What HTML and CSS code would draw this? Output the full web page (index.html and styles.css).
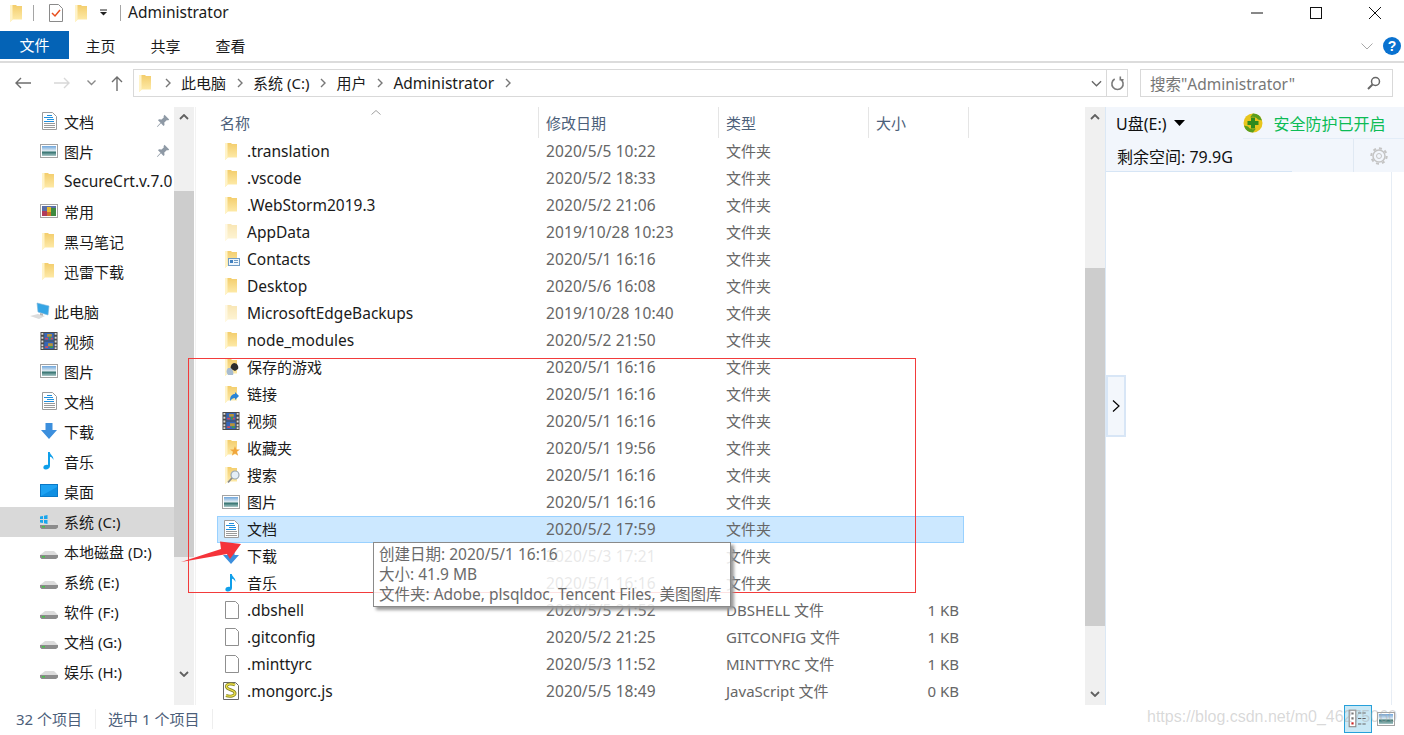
FILE: index.html
```html
<!DOCTYPE html>
<html lang="zh">
<head>
<meta charset="utf-8">
<title>Administrator</title>
<link rel="stylesheet" href="styles.css">
</head>
<body>
<svg class="defs" width="0" height="0" aria-hidden="true">
  <defs>
    <linearGradient id="fg" x1="0" y1="0" x2="0" y2="1"><stop offset="0" stop-color="#f3cd6c"/><stop offset="1" stop-color="#ffeeb0"/></linearGradient>
    <linearGradient id="sky" x1="0" y1="0" x2="0" y2="1"><stop offset="0" stop-color="#6fa6dc"/><stop offset=".5" stop-color="#e4eef2"/><stop offset=".6" stop-color="#2f6f6c"/><stop offset="1" stop-color="#a9c8c8"/></linearGradient>
    <symbol id="i-folder" viewBox="0 0 18 18">
      <path d="M3 1h6l1 1h5v13.500H6L3 18z" fill="url(#fg)"/>
      <path d="M3 1h2.500v14.500L3 18z" fill="#fff3c8"/>
    </symbol>
    <symbol id="i-doc" viewBox="0 0 18 18">
      <path d="M2.500.5h10l4 4v13h-14z" fill="#fff" stroke="#9b9b9b"/>
      <path d="M7 3.500h5M4 5.500h9M7 7.500h7M4 9.500h10" stroke="#1e90e0" fill="none"/>
      <path d="M4 11.500h11M4 13.500h11M4 15.500h11" stroke="#9a9a9a" fill="none"/>
    </symbol>
    <symbol id="i-pic" viewBox="0 0 18 18">
      <rect x=".5" y="2.500" width="17" height="13" fill="#fff" stroke="#a3a3a3"/>
      <rect x="2" y="4" width="14" height="10" fill="url(#sky)"/>
    </symbol>
    <symbol id="i-video" viewBox="0 0 18 19">
      <rect x="0" y="0" width="18" height="19" fill="#4a4a4a"/>
      <path d="M1 1h2v2H1zM1 5h2v2H1zM1 9h2v2H1zM1 13h2v2H1zM1 16h2v2H1zM15 1h2v2h-2zM15 5h2v2h-2zM15 9h2v2h-2zM15 13h2v2h-2zM15 16h2v2h-2z" fill="#ddd"/>
      <rect x="4" y="1" width="10" height="8" fill="#3566b8"/>
      <rect x="4" y="10" width="10" height="8" fill="#3566b8"/>
      <path d="M7 2h5v3H7zM8 12h5v3H8z" fill="#b9923a"/>
      <path d="M5 6h3v2H5zM10 6h3v2h-3zM5 15h3v2H5z" fill="#d24a5a"/>
      <path d="M9 5h2v3H9zM10 15h3v2h-3z" fill="#3c9a4a"/>
    </symbol>
    <symbol id="i-mix" viewBox="0 0 18 18">
      <rect x=".5" y="2.500" width="17" height="13" fill="#fff" stroke="#a3a3a3"/>
      <rect x="2" y="4" width="14" height="10" fill="#5a6fa8"/>
      <path d="M2 9h5v5H2z" fill="#b13b5a"/>
      <path d="M7 5h4v5H7z" fill="#e8b92f"/>
      <path d="M11 6h5v8h-5z" fill="#3f8a3f"/>
      <path d="M7 10h4v4H7z" fill="#d0702a"/>
    </symbol>
    <symbol id="i-down" viewBox="0 0 18 18">
      <path d="M5.500 1h7v7H17l-8 9-8-9h4.500z" fill="#3c8fdd"/>
    </symbol>
    <symbol id="i-music" viewBox="0 0 18 18">
      <path d="M8 0h1.800c.3 3 4.200 4 3.600 8-.6-2-2-3-3.400-3.200V14c0 2.200-2.200 3.500-4.200 3.500S3 16.200 3.500 14.700C4 13.200 6.300 12.400 8 13z" fill="#0f9fea"/>
    </symbol>
    <symbol id="i-desk" viewBox="0 0 18 18">
      <rect x=".5" y="2.500" width="17" height="12" fill="#1ea2f2" stroke="#0b78c6"/>
      <path d="M1 14l16-9v9z" fill="#0f8fe2"/>
    </symbol>
    <symbol id="i-drive" viewBox="0 0 18 18">
      <path d="M0 13l5-4h9l4 4z" fill="#dcdcdc"/>
      <path d="M0 13h18v2.500L16 17H1.500L0 15.500z" fill="#8c8c8c"/>
      <path d="M2 14h3v1.500H2z" fill="#48c048"/>
    </symbol>
    <symbol id="i-cdrive" viewBox="0 0 18 18">
      <path d="M0 13l5-4h9l4 4z" fill="#dcdcdc"/>
      <path d="M0 13h18v2.500L16 17H1.500L0 15.500z" fill="#8c8c8c"/>
      <path d="M2 14h3v1.500H2z" fill="#48c048"/>
      <path d="M0 4.500l3-.5v3H0zM4 3.800L7.500 3v4H4zM0 8h3v3l-3-.5zM4 8h3.500v4L4 11.300z" fill="#19a5ec"/>
    </symbol>
    <symbol id="i-pc" viewBox="0 0 20 18">
      <path d="M7 1l12 3-1 9-10-3z" fill="#35a5e5" stroke="#7db6d8" stroke-width=".6"/>
      <path d="M0 14l8-2 7 2-6 3z" fill="#dcdcdc"/>
      <path d="M10 11l3 .8v2L10 13z" fill="#b5b5b5"/>
    </symbol>
    <symbol id="i-pin" viewBox="0 0 14 14">
      <path d="M8.500.800l4.700 4.700-1.200 1-1-.4L8.300 8.400 8.500 11 7.500 12 5 9.300 1.500 13 1 12.500 4.500 8.800 2 6.300l1-1 2.600.3 2.300-2.300-.4-1z" fill="#8e99a5"/>
    </symbol>
    <symbol id="i-file" viewBox="0 0 18 18">
      <path d="M3.500.5h10l3 3v14h-13z" fill="#fff" stroke="#8f8f8f"/>
    </symbol>
    <symbol id="i-script" viewBox="0 0 18 18">
      <path d="M1.500.5h12l3 3v14h-15z" fill="#fff" stroke="#666"/>
      <path d="M13 3c-4-2-9-1-8.500 2 .5 3 8 2.500 8.500 6 .3 3-5 4-9 2.500" fill="none" stroke="#8a8a2a" stroke-width="3"/>
      <path d="M13 3c-4-2-9-1-8.500 2 .5 3 8 2.500 8.500 6 .3 3-5 4-9 2.500" fill="none" stroke="#f1e24a" stroke-width="1.200"/>
    </symbol>
    <symbol id="i-contacts" viewBox="0 0 18 18">
      <use href="#i-folder"/>
      <rect x="6.500" y="8.500" width="11" height="7" fill="#eef5fb" stroke="#6f9bc4"/>
      <path d="M8 10h3v3H8z" fill="#3f7fbf"/><path d="M12 10.500h4M12 12.500h4" stroke="#6f9bc4"/>
    </symbol>
    <symbol id="i-games" viewBox="0 0 18 18">
      <use href="#i-folder"/>
      <path d="M12 5c-3 1-4 4-3 6l4 2 3-2c1-3-1-6-4-6z" fill="#2b2b2b"/>
      <path d="M6 10c-2 2-2 5 0 7h5c1-2 0-5-2-7z" fill="#a7bbd0"/>
    </symbol>
    <symbol id="i-link" viewBox="0 0 18 18">
      <use href="#i-folder"/>
      <path d="M8 16c0-5 2-7 5-7V7l4 4-4 4v-2c-2 0-3.500 1-5 3z" fill="#2a84d6"/>
    </symbol>
    <symbol id="i-fav" viewBox="0 0 18 18">
      <use href="#i-folder"/>
      <path d="M13 7l1.300 3.500H18l-3 2.300 1.200 4L13 14.500 9.800 16.800l1.200-4-3-2.300h3.700z" fill="#f0a63c"/>
    </symbol>
    <symbol id="i-search" viewBox="0 0 18 18">
      <use href="#i-folder"/>
      <circle cx="13" cy="9" r="4" fill="#e4eef7" stroke="#9aa7b0" stroke-width="1.200"/>
      <path d="M10 12l-4 4.500" stroke="#8a8a8a" stroke-width="1.800"/>
    </symbol>
  </defs>
</svg>

<div class="window">
  <header class="titlebar">
    <svg class="ico18 tb-folder"><use href="#i-folder"/></svg>
    <span class="tb-sep"></span>
    <svg class="tb-check" viewBox="0 0 14 18"><path d="M.5.5h9l4 4v13H.5z" fill="#fff" stroke="#8a8a8a"/><path d="M3 9l3 3 5-6" fill="none" stroke="#e8501f" stroke-width="1.500"/></svg>
    <svg class="ico18 tb-folder2"><use href="#i-folder"/></svg>
    <svg class="tb-drop" viewBox="0 0 8 7"><path d="M0 1h7" stroke="#222"/><path d="M0 3h7L3.500 6.500z" fill="#222"/></svg>
    <span class="tb-sep tb-sep2"></span>
    <span class="tb-title lat">Administrator</span>
    <div class="win-btns">
      <svg viewBox="0 0 12 12"><path d="M0 6h12" stroke="#111"/></svg>
      <svg viewBox="0 0 12 12"><rect x=".5" y=".5" width="11" height="11" fill="none" stroke="#111"/></svg>
      <svg viewBox="0 0 12 12"><path d="M0 0l12 12M12 0L0 12" stroke="#111"/></svg>
    </div>
  </header>

  <nav class="ribbon">
    <span class="tab tab-file">文件</span>
    <span class="tab">主页</span>
    <span class="tab">共享</span>
    <span class="tab">查看</span>
    <svg class="rb-chev" viewBox="0 0 12 7"><path d="M.5.500L6 6l5.500-5.500" fill="none" stroke="#a8a8a8"/></svg>
    <svg class="rb-help" viewBox="0 0 18 18"><circle cx="9" cy="9" r="9" fill="#0a72d0"/><text x="9" y="14" text-anchor="middle" class="help-q">?</text></svg>
  </nav>

  <div class="addrrow">
    <svg class="ar-btn ar-back" viewBox="0 0 16 12"><path d="M16 6H1M6 1L1 6l5 5" fill="none" stroke="#6d6d6d" stroke-width="1.400"/></svg>
    <svg class="ar-btn ar-fwd" viewBox="0 0 16 12"><path d="M0 6h15M10 1l5 5-5 5" fill="none" stroke="#d8d8d8" stroke-width="1.400"/></svg>
    <svg class="ar-btn ar-dn" viewBox="0 0 9 6"><path d="M.5.500L4.500 4.500 8.500.500" fill="none" stroke="#8a8a8a" stroke-width="1.400"/></svg>
    <svg class="ar-btn ar-up" viewBox="0 0 12 15"><path d="M6 15V1M1 6l5-5 5 5" fill="none" stroke="#6d6d6d" stroke-width="1.400"/></svg>
    <div class="addrbox">
      <svg class="ico18 ab-folder"><use href="#i-folder"/></svg>
      <svg class="crumb-sep" viewBox="0 0 10 10"><path d="M3 1l4 4-4 4" fill="none" stroke="#777" stroke-width="1.400"/></svg><span class="crumb">此电脑</span>
      <svg class="crumb-sep" viewBox="0 0 10 10"><path d="M3 1l4 4-4 4" fill="none" stroke="#777" stroke-width="1.400"/></svg><span class="crumb">系统 (C:)</span>
      <svg class="crumb-sep" viewBox="0 0 10 10"><path d="M3 1l4 4-4 4" fill="none" stroke="#777" stroke-width="1.400"/></svg><span class="crumb">用户</span>
      <svg class="crumb-sep" viewBox="0 0 10 10"><path d="M3 1l4 4-4 4" fill="none" stroke="#777" stroke-width="1.400"/></svg><span class="crumb lat">Administrator</span>
      <svg class="crumb-sep" viewBox="0 0 10 10"><path d="M3 1l4 4-4 4" fill="none" stroke="#777" stroke-width="1.400"/></svg>
      <svg class="ab-chev" viewBox="0 0 12 7"><path d="M1 1l5 5 5-5" fill="none" stroke="#666" stroke-width="1.400"/></svg>
      <span class="ab-refresh"><svg viewBox="0 0 16 16"><path d="M11 3.200A6 6 0 1 1 5 3.200M11 .5v3.500h3.500" fill="none" stroke="#7a7a7a" stroke-width="1.700"/></svg></span>
    </div>
    <div class="searchbox">
      <span class="sb-text lat">搜索"Administrator"</span>
      <svg viewBox="0 0 14 14"><circle cx="8.500" cy="5.500" r="4" fill="none" stroke="#666" stroke-width="1.500"/><path d="M5.500 8.500L1 13" stroke="#666" stroke-width="2"/></svg>
    </div>
  </div>

  <main class="content">
    <aside class="nav">
      <div class="nav-row"><svg class="ico18"><use href="#i-doc"/></svg><span class="nav-label">文档</span><svg class="pin"><use href="#i-pin"/></svg></div>
      <div class="nav-row"><svg class="ico18"><use href="#i-pic"/></svg><span class="nav-label">图片</span><svg class="pin"><use href="#i-pin"/></svg></div>
      <div class="nav-row"><svg class="ico18 nudge"><use href="#i-folder"/></svg><span class="nav-label lat">SecureCrt.v.7.0</span></div>
      <div class="nav-row"><svg class="ico18"><use href="#i-mix"/></svg><span class="nav-label">常用</span></div>
      <div class="nav-row"><svg class="ico18 nudge"><use href="#i-folder"/></svg><span class="nav-label">黑马笔记</span></div>
      <div class="nav-row"><svg class="ico18 nudge"><use href="#i-folder"/></svg><span class="nav-label">迅雷下载</span></div>
      <div class="nav-row nav-pc"><svg class="ico-pc"><use href="#i-pc"/></svg><span class="nav-label">此电脑</span></div>
      <div class="nav-row"><svg class="ico18"><use href="#i-video"/></svg><span class="nav-label">视频</span></div>
      <div class="nav-row"><svg class="ico18"><use href="#i-pic"/></svg><span class="nav-label">图片</span></div>
      <div class="nav-row"><svg class="ico18"><use href="#i-doc"/></svg><span class="nav-label">文档</span></div>
      <div class="nav-row"><svg class="ico18"><use href="#i-down"/></svg><span class="nav-label">下载</span></div>
      <div class="nav-row"><svg class="ico18"><use href="#i-music"/></svg><span class="nav-label">音乐</span></div>
      <div class="nav-row"><svg class="ico18"><use href="#i-desk"/></svg><span class="nav-label">桌面</span></div>
      <div class="nav-row is-current"><svg class="ico18"><use href="#i-cdrive"/></svg><span class="nav-label">系统 (C:)</span></div>
      <div class="nav-row"><svg class="ico18"><use href="#i-drive"/></svg><span class="nav-label">本地磁盘 (D:)</span></div>
      <div class="nav-row"><svg class="ico18"><use href="#i-drive"/></svg><span class="nav-label">系统 (E:)</span></div>
      <div class="nav-row"><svg class="ico18"><use href="#i-drive"/></svg><span class="nav-label">软件 (F:)</span></div>
      <div class="nav-row"><svg class="ico18"><use href="#i-drive"/></svg><span class="nav-label">文档 (G:)</span></div>
      <div class="nav-row"><svg class="ico18"><use href="#i-drive"/></svg><span class="nav-label">娱乐 (H:)</span></div>
    </aside>
    <div class="scrollbar sb-nav">
      <svg class="sb-arrow" viewBox="0 0 10 6"><path d="M1 5l4-4 4 4" fill="none" stroke="#606060" stroke-width="1.800"/></svg>
      <div class="sb-thumb"></div>
      <svg class="sb-arrow" viewBox="0 0 10 6"><path d="M1 1l4 4 4-4" fill="none" stroke="#606060" stroke-width="1.800"/></svg>
    </div>

    <section class="files">
      <svg class="sort-caret" viewBox="0 0 10 5"><path d="M.5 4.500L5 .5l4.500 4" fill="none" stroke="#a0a0a0"/></svg>
      <div class="col-head">
        <span class="col">名称</span><span class="col col-p">修改日期</span><span class="col col-p">类型</span><span class="col col-p">大小</span>
      </div>
      <div class="row"><span class="name"><svg class="ico18"><use href="#i-folder"/></svg><span class="lat">.translation</span></span><span class="date">2020/5/5 10:22</span><span>文件夹</span><span class="size"></span></div>
      <div class="row"><span class="name"><svg class="ico18"><use href="#i-folder"/></svg><span class="lat">.vscode</span></span><span class="date">2020/5/2 18:33</span><span>文件夹</span><span class="size"></span></div>
      <div class="row"><span class="name"><svg class="ico18"><use href="#i-folder"/></svg><span class="lat">.WebStorm2019.3</span></span><span class="date">2020/5/2 21:06</span><span>文件夹</span><span class="size"></span></div>
      <div class="row"><span class="name"><svg class="ico18 faded"><use href="#i-folder"/></svg><span class="lat">AppData</span></span><span class="date">2019/10/28 10:23</span><span>文件夹</span><span class="size"></span></div>
      <div class="row"><span class="name"><svg class="ico18"><use href="#i-contacts"/></svg><span class="lat">Contacts</span></span><span class="date">2020/5/1 16:16</span><span>文件夹</span><span class="size"></span></div>
      <div class="row"><span class="name"><svg class="ico18"><use href="#i-folder"/></svg><span class="lat">Desktop</span></span><span class="date">2020/5/6 16:08</span><span>文件夹</span><span class="size"></span></div>
      <div class="row"><span class="name"><svg class="ico18 faded"><use href="#i-folder"/></svg><span class="lat">MicrosoftEdgeBackups</span></span><span class="date">2019/10/28 10:40</span><span>文件夹</span><span class="size"></span></div>
      <div class="row"><span class="name"><svg class="ico18"><use href="#i-folder"/></svg><span class="lat">node_modules</span></span><span class="date">2020/5/2 21:50</span><span>文件夹</span><span class="size"></span></div>
      <div class="row"><span class="name"><svg class="ico18"><use href="#i-games"/></svg>保存的游戏</span><span class="date">2020/5/1 16:16</span><span>文件夹</span><span class="size"></span></div>
      <div class="row"><span class="name"><svg class="ico18"><use href="#i-link"/></svg>链接</span><span class="date">2020/5/1 16:16</span><span>文件夹</span><span class="size"></span></div>
      <div class="row"><span class="name"><svg class="ico18"><use href="#i-video"/></svg>视频</span><span class="date">2020/5/1 16:16</span><span>文件夹</span><span class="size"></span></div>
      <div class="row"><span class="name"><svg class="ico18"><use href="#i-fav"/></svg>收藏夹</span><span class="date">2020/5/1 19:56</span><span>文件夹</span><span class="size"></span></div>
      <div class="row"><span class="name"><svg class="ico18"><use href="#i-search"/></svg>搜索</span><span class="date">2020/5/1 16:16</span><span>文件夹</span><span class="size"></span></div>
      <div class="row"><span class="name"><svg class="ico18"><use href="#i-pic"/></svg>图片</span><span class="date">2020/5/1 16:16</span><span>文件夹</span><span class="size"></span></div>
      <div class="row is-selected"><span class="name"><svg class="ico18"><use href="#i-doc"/></svg>文档</span><span class="date">2020/5/2 17:59</span><span>文件夹</span><span class="size"></span></div>
      <div class="row"><span class="name"><svg class="ico18"><use href="#i-down"/></svg>下载</span><span class="date">2020/5/3 17:21</span><span>文件夹</span><span class="size"></span></div>
      <div class="row"><span class="name"><svg class="ico18"><use href="#i-music"/></svg>音乐</span><span class="date">2020/5/1 16:16</span><span>文件夹</span><span class="size"></span></div>
      <div class="row"><span class="name"><svg class="ico18"><use href="#i-file"/></svg><span class="lat">.dbshell</span></span><span class="date">2020/5/5 21:52</span><span>DBSHELL 文件</span><span class="size">1 KB</span></div>
      <div class="row"><span class="name"><svg class="ico18"><use href="#i-file"/></svg><span class="lat">.gitconfig</span></span><span class="date">2020/5/2 21:25</span><span>GITCONFIG 文件</span><span class="size">1 KB</span></div>
      <div class="row"><span class="name"><svg class="ico18"><use href="#i-file"/></svg><span class="lat">.minttyrc</span></span><span class="date">2020/5/3 11:52</span><span>MINTTYRC 文件</span><span class="size">1 KB</span></div>
      <div class="row"><span class="name"><svg class="ico18"><use href="#i-script"/></svg><span class="lat">.mongorc.js</span></span><span class="date">2020/5/5 18:49</span><span>JavaScript 文件</span><span class="size">0 KB</span></div>
    </section>

    <div class="scrollbar sb-files">
      <svg class="sb-arrow" viewBox="0 0 10 6"><path d="M1 5l4-4 4 4" fill="none" stroke="#606060" stroke-width="1.800"/></svg>
      <div class="sb-thumb"></div>
      <svg class="sb-arrow" viewBox="0 0 10 6"><path d="M1 1l4 4 4-4" fill="none" stroke="#606060" stroke-width="1.800"/></svg>
    </div>

    <aside class="panel">
      <div class="panel-top">
        <span class="drive-name">U盘(E:)</span>
        <svg class="drive-tri" viewBox="0 0 11 6"><path d="M0 0h11L5.500 6z" fill="#000"/></svg>
        <svg class="shield" viewBox="0 0 20 20"><circle cx="10" cy="10" r="9.500" fill="#e8c51c"/><path d="M10 .5a9.500 9.500 0 0 1 9 7l-4-1a6 6 0 0 0-8-2zM10 19.500a9.500 9.500 0 0 1-9-7l4 1a6 6 0 0 0 8 2z" fill="#5a9e1e"/><path d="M8 4.500h4V8h3.500v4H12v3.500H8V12H4.500V8H8z" fill="#2f8a1e"/></svg>
        <span class="safe-text">安全防护已开启</span>
      </div>
      <div class="panel-info">
        <span class="free">剩余空间: 79.9G</span>
        <span class="gear-cell"><svg viewBox="0 0 18 18"><circle cx="9" cy="9" r="6" fill="none" stroke="#c4c4c4" stroke-width="1.500"/><circle cx="9" cy="9" r="7.700" fill="none" stroke="#c4c4c4" stroke-width="2" stroke-dasharray="3 3"/><circle cx="9" cy="9" r="2.500" fill="none" stroke="#c4c4c4"/></svg></span>
      </div>
      <div class="panel-body"></div>
      <div class="panel-handle"><svg viewBox="0 0 8 12"><path d="M1 .5L7 6l-6 5.500" fill="none" stroke="#000" stroke-width="1.200"/></svg></div>
    </aside>
  </main>

  <footer class="status">
    <span class="st-item">32 个项目</span>
    <span class="st-item">选中 1 个项目</span>
    <div class="views">
      <span class="view view-on"><svg viewBox="0 0 20 18"><rect x="2" y="1" width="6" height="15" fill="#fff" stroke="#888"/><path d="M4 3h2v2H4zM4 7.500h2v2H4z" fill="#777"/><path d="M4 12h2v2H4z" fill="#c22"/><path d="M10 3.500h8M10 8.500h8M10 13.500h8" stroke="#666" stroke-dasharray="3 1"/></svg></span>
      <svg class="view-big"><use href="#i-pic"/></svg>
    </div>
  </footer>

  <div class="watermark">https://blog.csdn.net/m0_46275060</div>
  <div class="red-box"></div>
  <div class="tooltip">
    <div>创建日期: 2020/5/1 16:16</div>
    <div>大小: 41.9 MB</div>
    <div>文件夹: Adobe, plsqldoc, Tencent Files, 美图图库</div>
  </div>
  <svg class="red-arrow" viewBox="0 0 62 24"><path d="M0 22L40 9 39 1.500 60 4 49 19 46 14z" fill="#f5333a"/></svg>
</div>
</body>
</html>
```

FILE: styles.css
```css
* { box-sizing: border-box; }
html, body { margin: 0; padding: 0; background: #fff; }
body {
  font-family: "Noto Sans", "Noto Sans CJK SC", sans-serif;
  font-size: 15px;
  color: #1a1a1a;
  overflow: hidden;
}
.defs { position: absolute; }
svg { display: block; flex: none; }
.window { position: relative; width: 1404px; height: 735px; overflow: hidden; display: flex; flex-direction: column; }
.ico18 { width: 18px; height: 18px; }
.lat { font-size: 15.5px; }

/* Title bar */
.titlebar { height: 31px; display: flex; align-items: center; padding: 0 0 6px 7px; }
.tb-sep { width: 1px; height: 16px; background: #a5a5a5; margin-left: 8px; }
.tb-check { width: 14px; height: 18px; margin-left: 15px; }
.tb-folder2 { margin-left: 9px; }
.tb-drop { width: 8px; height: 7px; margin-left: 10px; }
.tb-sep2 { margin-left: 12px; }
.tb-title { margin-left: 7px; line-height: 20px; margin-bottom: 2px; }
.win-btns { margin-left: auto; display: flex; gap: 47px; padding-right: 23px; }
.win-btns svg { width: 12px; height: 12px; }

/* Ribbon */
.ribbon { height: 32px; display: flex; align-items: flex-start; border-bottom: 2px solid #dcdcdc; }
.tab { height: 28px; width: 65px; line-height: 31px; text-align: center; }
.tab-file { width: 69px; line-height: 29px; background: #0463b6; color: #fff; margin-right: -1px; }
.rb-chev { width: 12px; height: 7px; margin: 12px 0 0 auto; }
.rb-help { width: 18px; height: 18px; margin: 6px 3px 0 10px; }
.help-q { font: bold 14px "Liberation Sans", sans-serif; fill: #fff; }

/* Address row */
.addrrow { height: 44px; display: flex; align-items: center; padding-bottom: 4px; }
.ar-btn { height: auto; }
.ar-back { width: 16px; margin-left: 15px; }
.ar-fwd { width: 16px; margin-left: 23px; }
.ar-dn { width: 9px; margin-left: 17px; }
.ar-up { width: 12px; margin-left: 15px; }
.addrbox { width: 995px; height: 28px; margin-left: 10px; border: 1px solid #d9d9d9; display: flex; align-items: center; padding-left: 2px; }
.crumb-sep { width: 10px; height: 10px; margin-left: 9px; }
.crumb { margin-left: 8px; line-height: 24px; color: #1a1a1a; }
.ab-chev { width: 11px; height: 7px; margin-left: auto; }
.ab-refresh { width: 21px; height: 26px; margin-left: 4px; border-left: 1px solid #d9d9d9; display: flex; align-items: center; justify-content: center; }
.ab-refresh svg { width: 15px; height: 15px; }
.searchbox { width: 253px; height: 28px; margin-left: 12px; border: 1px solid #d9d9d9; display: flex; align-items: center; justify-content: space-between; padding: 0 11px 0 9px; color: #777; }
.searchbox svg { width: 14px; height: 14px; }

/* Main */
.content { height: 598px; display: flex; }
.nav { width: 174px; flex: none; }
.nav-row { height: 30px; display: flex; align-items: center; padding: 0 0 2px 40px; gap: 6px; white-space: nowrap; overflow: hidden; }
.nudge { margin-left: -1px; margin-right: 1px; }
.nav-pc { margin-top: 10px; padding-left: 30px; gap: 4px; }
.ico-pc { width: 20px; height: 18px; }
.is-current { background: #d9d9d9; }
.pin { width: 14px; height: 14px; margin-left: auto; margin-right: 4px; }

.scrollbar { width: 20px; flex: none; background: #f0f0f0; display: flex; flex-direction: column; align-items: center; }
.sb-arrow { width: 10px; height: 6px; margin: 7px 0; }
.sb-thumb { width: 100%; }
.sb-nav { margin-right: 1px; }
.sb-nav .sb-thumb { height: 366px; margin: 64px 0 114px; background: #cdcdcd; }
.sb-nav .sb-arrow:last-child { margin-top: 0; }
.sb-files .sb-thumb { height: 358px; margin: 141px 0 65px; background: #cdcdcd; }
.sb-files .sb-arrow:last-child { margin-top: 0; }

.files { position: relative; width: 890px; flex: none; padding-left: 21px; border-left: 1px solid #f2f2f2; }
.sort-caret { position: absolute; left: 175px; top: 3px; width: 10px; height: 5px; }
.col-head { height: 31px; display: grid; grid-template-columns: 322px 180px 150px 100px; color: #4c607a; }
.col { border-right: 1px solid #e5e5e5; padding: 6px 0 0 3px; line-height: 20px; }
.col-p { padding-left: 7px; }
.row { width: 747px; height: 27px; display: grid; grid-template-columns: 328px 180px 150px 87px; align-items: center; border: 1px solid transparent; padding-bottom: 2px; color: #666; white-space: nowrap; }
.name { display: flex; align-items: center; gap: 7px; padding-left: 4px; color: #1a1a1a; }
.date { font-size: 15.5px; letter-spacing: .1px; }
.size { text-align: right; padding-right: 4px; }
.faded { opacity: .5; }
.is-selected { background: #cce8ff; border-color: #99d1ff; }

/* Right panel */
.panel { position: relative; width: 299px; flex: none; border-left: 1px solid #dbe8f5; display: flex; flex-direction: column; font-size: 16px; }
.panel-top { height: 32px; flex: none; background: linear-gradient(#e3edf8, #e3edf8) no-repeat right bottom / 161px 1px, #f2f6fc; display: flex; align-items: center; padding-left: 10px; }
.drive-name { color: #111; }
.drive-tri { width: 11px; height: 6px; margin-left: 8px; }
.shield { width: 20px; height: 20px; margin-left: 58px; }
.safe-text { margin-left: 10px; color: #0cbc55; }
.panel-info { height: 33px; flex: none; background: linear-gradient(#d6e5f5, #d6e5f5) no-repeat left bottom / 186px 1px, #f2f6fc; display: flex; align-items: center; justify-content: space-between; padding-left: 11px; }
.free { color: #111; }
.gear-cell { width: 51px; height: 100%; border-left: 1px solid #e0e9f3; display: flex; align-items: center; justify-content: center; }
.gear-cell svg { width: 18px; height: 18px; }
.panel-body { flex: 1; width: 286px; border-right: 1px solid #e6edf5; }
.panel-handle { position: absolute; left: 0; top: 268px; width: 20px; height: 62px; background: #f3f7fc; border: 2px solid #d8e6f6; display: flex; align-items: center; justify-content: center; }
.panel-handle svg { width: 8px; height: 12px; }

/* Status bar */
.status { height: 30px; display: flex; align-items: center; color: #4c607a; padding: 0 0 2px 16px; }
.st-item { padding-right: 13px; margin-right: 12px; border-right: 1px solid #eee; line-height: 20px; }
.views { margin-left: auto; display: flex; align-items: flex-start; gap: 5px; padding-right: 9px; height: 100%; }
.view { width: 28px; height: 28px; display: flex; align-items: center; justify-content: center; }
.view-on { background: #c9e8f5; border: 1px solid #26a0da; }
.view-on svg { width: 22px; height: 20px; }
.view-big { width: 18px; height: 18px; margin-top: 5px; }

/* Overlays */
.watermark { position: absolute; left: 1147px; top: 708px; font: 16px "Liberation Sans", sans-serif; color: rgba(170,170,170,.45); white-space: nowrap; }
.red-box { position: absolute; left: 188px; top: 358px; width: 728px; height: 235px; border: 1px solid #f23b3b; }
.tooltip { position: absolute; left: 373px; top: 542px; width: 358px; height: 65px; padding: 1px 0 0 5px; border: 1px solid #8a8a8a; background: rgba(255,255,255,.85); box-shadow: 3px 3px 3px #9a9a9a; color: #6a6a6a; font-size: 15.5px; line-height: 20px; white-space: nowrap; }
.red-arrow { position: absolute; left: 181px; top: 540px; width: 62px; height: 24px; }
```
